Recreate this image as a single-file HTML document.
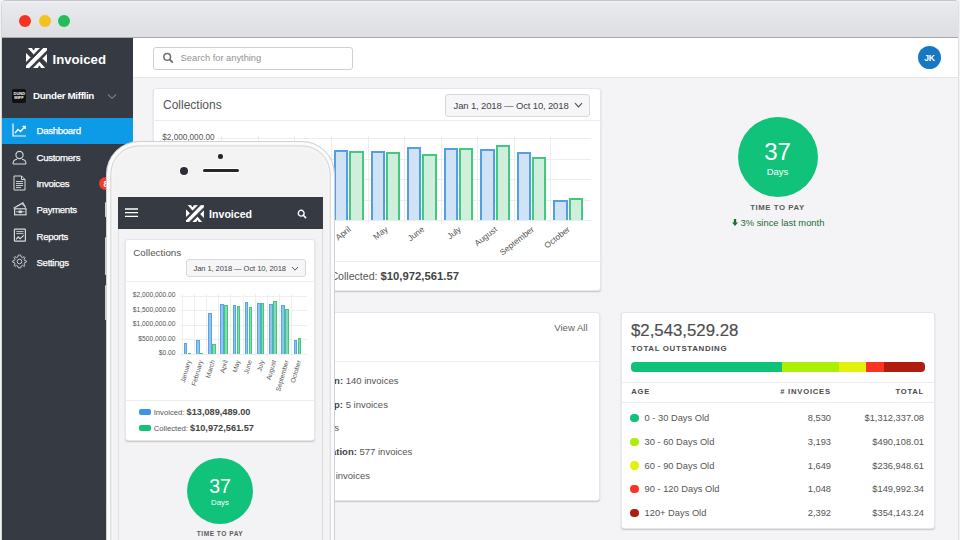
<!DOCTYPE html>
<html><head><meta charset="utf-8"><style>
*{margin:0;padding:0;box-sizing:border-box}
html,body{width:960px;height:540px;overflow:hidden;background:#f2f2f2;font-family:"Liberation Sans", sans-serif}
.t{position:absolute;white-space:nowrap;line-height:1}
.r{position:absolute}
</style></head>
<body>
<div class="r" style="left:1px;top:0px;width:958px;height:560px;background:#f4f4f6;border:1px solid #c4c4c6;border-right-color:#e0e0e2;border-left-color:#d6d6d8;border-radius:5px 5px 0 0"></div>
<div class="r" style="left:2px;top:1px;width:956px;height:37px;background:linear-gradient(#f4f5f7 0,#e9eaee 2px,#dcdee2);border-radius:4px 4px 0 0"></div>
<div class="r" style="left:2px;top:37px;width:956px;height:1px;background:#a9aaae"></div>
<div class="r" style="left:19px;top:14.5px;width:12px;height:12px;background:#f5331f;border-radius:50%"></div>
<div class="r" style="left:39px;top:14.5px;width:12px;height:12px;background:#f4c21c;border-radius:50%"></div>
<div class="r" style="left:58px;top:14.5px;width:12px;height:12px;background:#25bd58;border-radius:50%"></div>
<div class="r" style="left:2px;top:38px;width:131px;height:510px;background:#363a43"></div>
<div class="r" style="left:133px;top:38px;width:825px;height:40px;background:#fff;border-bottom:1px solid #e4e4e7"></div>
<div class="r" style="left:153px;top:47px;width:200px;height:22.5px;border:1px solid #cfcfd3;border-radius:3px;background:#fff"></div>
<svg class="r" style="left:161px;top:51px" width="14" height="14" viewBox="0 0 14 14"><circle cx="6.2" cy="5.9" r="3.3" fill="none" stroke="#707070" stroke-width="1.5"/><path d="M8.6 8.4 L11.2 11" stroke="#707070" stroke-width="1.8" stroke-linecap="round"/></svg>
<div class="t" style="left:180.6px;top:53.83px;font-size:9.3px;color:#929296;font-weight:400;letter-spacing:0px;">Search for anything</div>
<div class="r" style="left:918px;top:46.3px;width:23px;height:23px;background:#1877c3;border-radius:50%"></div>
<div class="t" style="left:929.5px;transform:translateX(-50%);top:54.02px;font-size:8.6px;color:#fff;font-weight:700;letter-spacing:-0.2px;">JK</div>
<svg class="r" style="left:26px;top:48px" width="21" height="20" viewBox="0 0 21 20" style="overflow:visible"><g fill="#fff" stroke="#2c2f36" stroke-width="0.8" stroke-linejoin="round">
<polygon points="1,-0.5 6.2,-0.5 7.55,2.1 8.9,-0.5 15,-0.5 7.55,6.95"/>
<polygon points="17.3,-0.5 21.5,-0.5 21.5,2.2 3.2,20.5 -0.5,20.5 -0.5,17.8"/>
<polygon points="-0.5,4 5,9.5 -0.5,15"/>
<polygon points="21.5,16 16,10.5 21.5,5"/>
<polygon points="20,20.5 14.8,20.5 13.45,17.9 12.1,20.5 6,20.5 13.45,13.05"/>
</g></svg>
<div class="t" style="left:52.5px;top:52.63px;font-size:13.2px;color:#fff;font-weight:700;letter-spacing:0px;">Invoiced</div>
<div class="r" style="left:12px;top:89px;width:14px;height:14px;background:#111;border-radius:2px"></div>
<div class="t" style="left:13.5px;top:92px;font-size:4px;line-height:4px;color:#fff;font-weight:700;width:11px;text-align:center">DUND<br>MIFF</div>
<div class="t" style="left:33px;top:91.00px;font-size:9.8px;color:#fff;font-weight:700;letter-spacing:-0.35px;">Dunder Mifflin</div>
<svg class="r" style="left:107px;top:93px" width="10" height="7" viewBox="0 0 10 7"><path d="M1 1.5 L5 5.5 L9 1.5" fill="none" stroke="#777a80" stroke-width="1.1"/></svg>
<div class="r" style="left:2px;top:118px;width:131px;height:26px;background:#0d9ae6"></div>
<div class="t" style="left:36.5px;top:126.37px;font-size:9.6px;color:#fff;font-weight:400;letter-spacing:-0.3px;-webkit-text-stroke:0.25px #fff">Dashboard</div>
<div class="t" style="left:36.5px;top:152.67px;font-size:9.6px;color:#fff;font-weight:400;letter-spacing:-0.3px;-webkit-text-stroke:0.25px #fff">Customers</div>
<div class="t" style="left:36.5px;top:178.97px;font-size:9.6px;color:#fff;font-weight:400;letter-spacing:-0.3px;-webkit-text-stroke:0.25px #fff">Invoices</div>
<div class="t" style="left:36.5px;top:205.27px;font-size:9.6px;color:#fff;font-weight:400;letter-spacing:-0.3px;-webkit-text-stroke:0.25px #fff">Payments</div>
<div class="t" style="left:36.5px;top:231.57px;font-size:9.6px;color:#fff;font-weight:400;letter-spacing:-0.3px;-webkit-text-stroke:0.25px #fff">Reports</div>
<div class="t" style="left:36.5px;top:257.87px;font-size:9.6px;color:#fff;font-weight:400;letter-spacing:-0.3px;-webkit-text-stroke:0.25px #fff">Settings</div>
<svg class="r" style="left:12px;top:123px" width="15" height="14" viewBox="0 0 15 14"><path d="M1 0.5 V13 H14" fill="none" stroke="#fff" stroke-width="1.2"/><path d="M3 10 L6 6.5 L8.5 8.5 L13 3.5 M10.5 3.3 H13.2 V6" fill="none" stroke="#fff" stroke-width="1.3"/></svg>
<svg class="r" style="left:12px;top:149.5px" width="15" height="15" viewBox="0 0 15 15"><circle cx="7.5" cy="5" r="3.6" fill="none" stroke="#d8d9db" stroke-width="1.1"/><path d="M1 14 C1 10.5 3.5 9.5 5 9.3 M14 14 C14 10.5 11.5 9.5 10 9.3 M1 14 H14" fill="none" stroke="#d8d9db" stroke-width="1.1"/></svg>
<svg class="r" style="left:13px;top:175px" width="13" height="16" viewBox="0 0 13 16"><path d="M1 1 H8.5 L12 4.5 V15 H1 Z M8.5 1 V4.5 H12" fill="none" stroke="#d8d9db" stroke-width="1"/><path d="M3 6.5 H10 M3 8.5 H10 M3 10.5 H10 M3 12.5 H8" stroke="#d8d9db" stroke-width="0.9"/></svg>
<svg class="r" style="left:12px;top:200px" width="16" height="16" viewBox="0 0 16 16"><path d="M1.6 8.2 L10.9 2.8 L13.6 7.6" fill="none" stroke="#d8d9db" stroke-width="1.2"/><path d="M4.5 6.6 L10.2 3.6 L11.5 6" fill="none" stroke="#d8d9db" stroke-width="0.8"/><rect x="2.6" y="8.8" width="11.4" height="6" fill="none" stroke="#d8d9db" stroke-width="1.2"/><ellipse cx="8.3" cy="11.8" rx="2" ry="1.5" fill="#d8d9db"/><path d="M4 11.8 H12.6" stroke="#d8d9db" stroke-width="0.8"/></svg>
<svg class="r" style="left:12px;top:227px" width="16" height="16" viewBox="0 0 16 16"><rect x="2.4" y="2.2" width="11" height="12" rx="0.8" fill="none" stroke="#d8d9db" stroke-width="1.2"/><path d="M4.3 4.6 H11.5 M4.3 6.6 H11.5" stroke="#d8d9db" stroke-width="0.9"/><path d="M4 12.4 L6.2 9.8 L8 11.6 L11.8 8.4" fill="none" stroke="#d8d9db" stroke-width="1.2"/></svg>
<svg class="r" style="left:11.5px;top:254px" width="15" height="15" viewBox="0 0 15 15"><path d="M7.5 1 L8.8 1.2 L9.2 3 L10.6 3.6 L12.1 2.6 L13 3.6 L12 5.1 L12.6 6.5 L14.3 6.9 L14.3 8.2 L12.6 8.6 L12 10 L13 11.5 L12.1 12.4 L10.6 11.4 L9.2 12 L8.8 13.8 L6.2 13.8 L5.8 12 L4.4 11.4 L2.9 12.4 L2 11.5 L3 10 L2.4 8.6 L0.7 8.2 L0.7 6.9 L2.4 6.5 L3 5.1 L2 3.6 L2.9 2.6 L4.4 3.6 L5.8 3 L6.2 1.2 Z" fill="none" stroke="#d8d9db" stroke-width="0.9"/><circle cx="7.5" cy="7.5" r="2.3" fill="none" stroke="#d8d9db" stroke-width="0.9"/></svg>
<div class="r" style="left:99px;top:176.7px;width:13.4px;height:13.4px;background:#f03e2b;border-radius:50%"></div>
<div class="t" style="left:103.4px;top:179.50px;font-size:8.5px;color:#fff;font-weight:700;letter-spacing:0px;">8</div>
<div class="r" style="left:153px;top:88px;width:447.5px;height:203px;background:#fff;border-radius:3px;border:1px solid #e6e6e8;box-shadow:0 1px 1.5px rgba(0,0,0,.2)"></div>
<div class="t" style="left:163px;top:98.94px;font-size:12px;color:#555;font-weight:400;letter-spacing:0px;">Collections</div>
<div class="r" style="left:444.7px;top:94.2px;width:145.8px;height:22.8px;background:#f6f6f8;border:1px solid #d8d8dc;border-radius:3px"></div>
<div class="t" style="left:453.6px;top:100.76px;font-size:9.5px;color:#3f4247;font-weight:400;letter-spacing:-0.15px;">Jan 1, 2018 — Oct 10, 2018</div>
<svg class="r" style="left:574px;top:101.5px" width="9" height="7" viewBox="0 0 9 7"><path d="M1 1.2 L4.5 4.9 L8 1.2" fill="none" stroke="#555" stroke-width="1.2"/></svg>
<div class="r" style="left:153px;top:119.5px;width:447.5px;height:1px;background:#ececee"></div>
<div class="r" style="left:218px;top:138px;width:372.5px;height:1px;background:#ececec"></div>
<div class="t" style="right:745.4px;top:133.56px;font-size:8.2px;color:#555;font-weight:400;letter-spacing:0px;">$2,000,000.00</div>
<div class="r" style="left:218px;top:158.5px;width:372.5px;height:1px;background:#ececec"></div>
<div class="t" style="right:745.4px;top:154.06px;font-size:8.2px;color:#555;font-weight:400;letter-spacing:0px;">$1,500,000.00</div>
<div class="r" style="left:218px;top:179px;width:372.5px;height:1px;background:#ececec"></div>
<div class="t" style="right:745.4px;top:174.56px;font-size:8.2px;color:#555;font-weight:400;letter-spacing:0px;">$1,000,000.00</div>
<div class="r" style="left:218px;top:199.5px;width:372.5px;height:1px;background:#ececec"></div>
<div class="t" style="right:745.4px;top:195.06px;font-size:8.2px;color:#555;font-weight:400;letter-spacing:0px;">$500,000.00</div>
<div class="r" style="left:218px;top:220px;width:372.5px;height:1px;background:#ececec"></div>
<div class="t" style="right:745.4px;top:215.56px;font-size:8.2px;color:#555;font-weight:400;letter-spacing:0px;">$0.00</div>
<div class="r" style="left:221.3px;top:136px;width:1px;height:87px;background:#ececec"></div>
<div class="r" style="left:257.87px;top:136px;width:1px;height:87px;background:#ececec"></div>
<div class="r" style="left:294.44px;top:136px;width:1px;height:87px;background:#ececec"></div>
<div class="r" style="left:331.01px;top:136px;width:1px;height:87px;background:#ececec"></div>
<div class="r" style="left:367.58000000000004px;top:136px;width:1px;height:87px;background:#ececec"></div>
<div class="r" style="left:404.15px;top:136px;width:1px;height:87px;background:#ececec"></div>
<div class="r" style="left:440.72px;top:136px;width:1px;height:87px;background:#ececec"></div>
<div class="r" style="left:477.29px;top:136px;width:1px;height:87px;background:#ececec"></div>
<div class="r" style="left:513.86px;top:136px;width:1px;height:87px;background:#ececec"></div>
<div class="r" style="left:550.4300000000001px;top:136px;width:1px;height:87px;background:#ececec"></div>
<div class="r" style="left:224.3px;top:204.63000000000002px;width:14.3px;height:15.369999999999976px;background:#cfe2f6;border:2px solid #519fe4;border-bottom:none"></div>
<div class="r" style="left:239.60000000000002px;top:219.39000000000001px;width:14.3px;height:0.6099999999999852px;background:#cfeedc;border:2px solid #41c97f;border-bottom:none"></div>
<div class="t" style="right:719.91px;top:224.00px;font-size:8.4px;color:#555;transform-origin:100% 50%;transform:rotate(-38deg)">January</div>
<div class="r" style="left:260.87px;top:200.12px;width:14.3px;height:19.879999999999995px;background:#cfe2f6;border:2px solid #519fe4;border-bottom:none"></div>
<div class="r" style="left:276.17px;top:218.98000000000002px;width:14.3px;height:1.0199999999999818px;background:#cfeedc;border:2px solid #41c97f;border-bottom:none"></div>
<div class="t" style="right:683.35px;top:224.00px;font-size:8.4px;color:#555;transform-origin:100% 50%;transform:rotate(-38deg)">February</div>
<div class="r" style="left:297.44px;top:162.4px;width:14.3px;height:57.599999999999994px;background:#cfe2f6;border:2px solid #519fe4;border-bottom:none"></div>
<div class="r" style="left:312.74px;top:205.86px;width:14.3px;height:14.139999999999986px;background:#cfeedc;border:2px solid #41c97f;border-bottom:none"></div>
<div class="t" style="right:646.77px;top:224.00px;font-size:8.4px;color:#555;transform-origin:100% 50%;transform:rotate(-38deg)">March</div>
<div class="r" style="left:334.01px;top:149.69px;width:14.3px;height:70.31px;background:#cfe2f6;border:2px solid #519fe4;border-bottom:none"></div>
<div class="r" style="left:349.31px;top:150.92000000000002px;width:14.3px;height:69.07999999999998px;background:#cfeedc;border:2px solid #41c97f;border-bottom:none"></div>
<div class="t" style="right:610.20px;top:224.00px;font-size:8.4px;color:#555;transform-origin:100% 50%;transform:rotate(-38deg)">April</div>
<div class="r" style="left:370.58000000000004px;top:150.715px;width:14.3px;height:69.285px;background:#cfe2f6;border:2px solid #519fe4;border-bottom:none"></div>
<div class="r" style="left:385.88000000000005px;top:151.945px;width:14.3px;height:68.055px;background:#cfeedc;border:2px solid #41c97f;border-bottom:none"></div>
<div class="t" style="right:573.63px;top:224.00px;font-size:8.4px;color:#555;transform-origin:100% 50%;transform:rotate(-38deg)">May</div>
<div class="r" style="left:407.15px;top:147.23000000000002px;width:14.3px;height:72.76999999999998px;background:#cfe2f6;border:2px solid #519fe4;border-bottom:none"></div>
<div class="r" style="left:422.45px;top:154.40500000000003px;width:14.3px;height:65.59499999999997px;background:#cfeedc;border:2px solid #41c97f;border-bottom:none"></div>
<div class="t" style="right:537.07px;top:224.00px;font-size:8.4px;color:#555;transform-origin:100% 50%;transform:rotate(-38deg)">June</div>
<div class="r" style="left:443.72px;top:147.64000000000001px;width:14.3px;height:72.35999999999999px;background:#cfe2f6;border:2px solid #519fe4;border-bottom:none"></div>
<div class="r" style="left:459.02000000000004px;top:148.255px;width:14.3px;height:71.745px;background:#cfeedc;border:2px solid #41c97f;border-bottom:none"></div>
<div class="t" style="right:500.49px;top:224.00px;font-size:8.4px;color:#555;transform-origin:100% 50%;transform:rotate(-38deg)">July</div>
<div class="r" style="left:480.29px;top:149.198px;width:14.3px;height:70.80199999999999px;background:#cfe2f6;border:2px solid #519fe4;border-bottom:none"></div>
<div class="r" style="left:495.59000000000003px;top:145.18px;width:14.3px;height:74.82px;background:#cfeedc;border:2px solid #41c97f;border-bottom:none"></div>
<div class="t" style="right:463.92px;top:224.00px;font-size:8.4px;color:#555;transform-origin:100% 50%;transform:rotate(-38deg)">August</div>
<div class="r" style="left:516.86px;top:151.699px;width:14.3px;height:68.30099999999999px;background:#cfe2f6;border:2px solid #519fe4;border-bottom:none"></div>
<div class="r" style="left:532.16px;top:157.193px;width:14.3px;height:62.80699999999999px;background:#cfeedc;border:2px solid #41c97f;border-bottom:none"></div>
<div class="t" style="right:427.36px;top:224.00px;font-size:8.4px;color:#555;transform-origin:100% 50%;transform:rotate(-38deg)">September</div>
<div class="r" style="left:553.4300000000001px;top:200.407px;width:14.3px;height:19.59299999999999px;background:#cfe2f6;border:2px solid #519fe4;border-bottom:none"></div>
<div class="r" style="left:568.73px;top:197.906px;width:14.3px;height:22.093999999999994px;background:#cfeedc;border:2px solid #41c97f;border-bottom:none"></div>
<div class="t" style="right:390.78px;top:224.00px;font-size:8.4px;color:#555;transform-origin:100% 50%;transform:rotate(-38deg)">October</div>
<div class="r" style="left:153px;top:261px;width:447.5px;height:1px;background:#ececee"></div>
<div class="t" style="left:190px;top:270.13px;font-size:11.3px;color:#555;font-weight:400;letter-spacing:0px;">Invoiced: <b style='font-size:11.2px'>$13,089,489.00</b></div>
<div class="t" style="right:501px;top:270.73px;font-size:10.6px;color:#555;font-weight:400;letter-spacing:0px;">Collected: <b style='font-size:11.3px;color:#444'>$10,972,561.57</b></div>
<div class="r" style="left:153px;top:311.6px;width:447px;height:189.5px;background:#fff;border-radius:3px;border:1px solid #e6e6e8;box-shadow:0 1px 1.5px rgba(0,0,0,.2)"></div>
<div class="t" style="right:372.4px;top:322.67px;font-size:9.6px;color:#666;font-weight:400;letter-spacing:0px;">View All</div>
<div class="r" style="left:153px;top:361px;width:447px;height:1px;background:#ececee"></div>
<div class="t" style="right:561.5px;top:375.96px;font-size:9.5px;color:#555;font-weight:400;letter-spacing:0px;"><b style='color:#444'>Awaiting Payment Plan:</b> 140 invoices</div>
<div class="t" style="right:572.1px;top:399.61px;font-size:9.5px;color:#555;font-weight:400;letter-spacing:0px;"><b style='color:#444'>Needs Follow Up:</b> 5 invoices</div>
<div class="t" style="right:621px;top:423.26px;font-size:9.5px;color:#555;font-weight:400;letter-spacing:0px;"><b style='color:#444'>Disputed:</b> 12 invoices</div>
<div class="t" style="right:547.7px;top:446.91px;font-size:9.5px;color:#555;font-weight:400;letter-spacing:0px;"><b style='color:#444'>Needs Payment Information:</b> 577 invoices</div>
<div class="t" style="right:590px;top:470.56px;font-size:9.5px;color:#555;font-weight:400;letter-spacing:0px;"><b style='color:#444'>Pending:</b> 31 invoices</div>
<div class="r" style="left:737.5px;top:116.5px;width:80px;height:80px;background:#10c27a;border-radius:50%"></div>
<div class="t" style="left:777.5px;transform:translateX(-50%);top:139.68px;font-size:24px;color:#fff;font-weight:400;letter-spacing:0px;">37</div>
<div class="t" style="left:777.5px;transform:translateX(-50%);top:166.96px;font-size:9.5px;color:#fff;font-weight:400;letter-spacing:0px;">Days</div>
<div class="t" style="left:777.5px;transform:translateX(-50%);top:204.40px;font-size:7.8px;color:#5a5a5c;font-weight:700;letter-spacing:0.55px;">TIME TO PAY</div>
<svg class="r" style="left:732px;top:219px" width="6" height="7" viewBox="0 0 6 7"><path d="M1.8 0 H4.2 V3.5 H6 L3 7 L0 3.5 H1.8 Z" fill="#1e6e38"/></svg>
<div class="t" style="left:740.5px;top:217.74px;font-size:9.4px;color:#226b35;font-weight:400;letter-spacing:0px;">3% since last month</div>
<div class="r" style="left:621px;top:312px;width:314px;height:216.8px;background:#fff;border-radius:3px;border:1px solid #e6e6e8;box-shadow:0 1px 1.5px rgba(0,0,0,.2)"></div>
<div class="t" style="left:631px;top:322.58px;font-size:16.8px;color:#4e4e50;font-weight:400;letter-spacing:0px;-webkit-text-stroke:0.2px #4e4e50">$2,543,529.28</div>
<div class="t" style="left:631.3px;top:344.51px;font-size:7.9px;color:#4a4a4a;font-weight:700;letter-spacing:0.65px;">TOTAL OUTSTANDING</div>
<div class="r" style="left:631px;top:362px;width:293.6px;height:9.6px;border-radius:4px;overflow:hidden"><div class="r" style="left:0.0px;top:0;width:151.1px;height:9.6px;background:#10c178"></div><div class="r" style="left:151.1px;top:0;width:57.0px;height:9.6px;background:#adee08"></div><div class="r" style="left:208.1px;top:0;width:26.8px;height:9.6px;background:#e2f20a"></div><div class="r" style="left:234.9px;top:0;width:17.9px;height:9.6px;background:#fb3322"></div><div class="r" style="left:252.8px;top:0;width:40.8px;height:9.6px;background:#b01c0e"></div></div>
<div class="r" style="left:621px;top:382px;width:314px;height:1px;background:#ececee"></div>
<div class="t" style="left:631.3px;top:388.07px;font-size:7.6px;color:#4a4a4a;font-weight:700;letter-spacing:0.8px;">AGE</div>
<div class="t" style="right:129.20000000000005px;top:388.07px;font-size:7.6px;color:#4a4a4a;font-weight:700;letter-spacing:0.8px;"># INVOICES</div>
<div class="t" style="right:36px;top:388.07px;font-size:7.6px;color:#4a4a4a;font-weight:700;letter-spacing:0.8px;">TOTAL</div>
<div class="r" style="left:621px;top:402px;width:314px;height:1px;background:#ececee"></div>
<div class="r" style="left:630.3px;top:414.2px;width:8.3px;height:8.3px;background:#10c178;border-radius:50%"></div>
<div class="t" style="left:644.6px;top:414.33px;font-size:9.3px;color:#555;font-weight:400;letter-spacing:0px;">0 - 30 Days Old</div>
<div class="t" style="right:129px;top:414.33px;font-size:9.3px;color:#555;font-weight:400;letter-spacing:0px;">8,530</div>
<div class="t" style="right:36px;top:414.33px;font-size:9.3px;color:#555;font-weight:400;letter-spacing:0px;">$1,312,337.08</div>
<div class="r" style="left:630.3px;top:437.8px;width:8.3px;height:8.3px;background:#adee08;border-radius:50%"></div>
<div class="t" style="left:644.6px;top:437.93px;font-size:9.3px;color:#555;font-weight:400;letter-spacing:0px;">30 - 60 Days Old</div>
<div class="t" style="right:129px;top:437.93px;font-size:9.3px;color:#555;font-weight:400;letter-spacing:0px;">3,193</div>
<div class="t" style="right:36px;top:437.93px;font-size:9.3px;color:#555;font-weight:400;letter-spacing:0px;">$490,108.01</div>
<div class="r" style="left:630.3px;top:461.4px;width:8.3px;height:8.3px;background:#e2f20a;border-radius:50%"></div>
<div class="t" style="left:644.6px;top:461.53px;font-size:9.3px;color:#555;font-weight:400;letter-spacing:0px;">60 - 90 Days Old</div>
<div class="t" style="right:129px;top:461.53px;font-size:9.3px;color:#555;font-weight:400;letter-spacing:0px;">1,649</div>
<div class="t" style="right:36px;top:461.53px;font-size:9.3px;color:#555;font-weight:400;letter-spacing:0px;">$236,948.61</div>
<div class="r" style="left:630.3px;top:485.0px;width:8.3px;height:8.3px;background:#fb3322;border-radius:50%"></div>
<div class="t" style="left:644.6px;top:485.13px;font-size:9.3px;color:#555;font-weight:400;letter-spacing:0px;">90 - 120 Days Old</div>
<div class="t" style="right:129px;top:485.13px;font-size:9.3px;color:#555;font-weight:400;letter-spacing:0px;">1,048</div>
<div class="t" style="right:36px;top:485.13px;font-size:9.3px;color:#555;font-weight:400;letter-spacing:0px;">$149,992.34</div>
<div class="r" style="left:630.3px;top:508.6px;width:8.3px;height:8.3px;background:#b01c0e;border-radius:50%"></div>
<div class="t" style="left:644.6px;top:508.73px;font-size:9.3px;color:#555;font-weight:400;letter-spacing:0px;">120+ Days Old</div>
<div class="t" style="right:129px;top:508.73px;font-size:9.3px;color:#555;font-weight:400;letter-spacing:0px;">2,392</div>
<div class="t" style="right:36px;top:508.73px;font-size:9.3px;color:#555;font-weight:400;letter-spacing:0px;">$354,143.24</div>
<div class="r" style="left:106px;top:141px;width:228.5px;height:460px;background:#f3f3f4;border:1px solid #d0d0d3;border-radius:33px;box-shadow:inset 0 0 0 3.2px #fbfbfb, inset 0 0 0 4.4px #d9d9dc, inset 0 0 4px 5px #f8f8f9"></div>
<div class="r" style="left:104.5px;top:202px;width:1.6px;height:15px;background:#d5d5d7;border-radius:1px"></div>
<div class="r" style="left:104.5px;top:237px;width:1.6px;height:38px;background:#d5d5d7;border-radius:1px"></div>
<div class="r" style="left:104.5px;top:285px;width:1.6px;height:35px;background:#d5d5d7;border-radius:1px"></div>
<div class="r" style="left:218.3px;top:154px;width:4.6px;height:4.6px;background:#222;border-radius:50%"></div>
<div class="r" style="left:180px;top:166.5px;width:8px;height:8px;background:#2a2d33;border-radius:50%;box-shadow:0 0 0 1px #fff"></div>
<div class="r" style="left:202.5px;top:169px;width:36.2px;height:3.2px;background:#25272b;border-radius:2px;box-shadow:0 0 0 1px #fff"></div>
<div class="r" style="left:118px;top:197px;width:205px;height:360px;background:#f3f3f5;border-left:1px solid #e2e2e4;border-right:1px solid #dcdcde"></div>
<div class="r" style="left:118px;top:197px;width:205px;height:32.2px;background:#363a43"></div>
<svg class="r" style="left:124.5px;top:208px" width="14" height="10" viewBox="0 0 14 10"><path d="M0 1 H13 M0 4.7 H13 M0 8.4 H13" stroke="#fff" stroke-width="1.3"/></svg>
<svg class="r" style="left:186.4px;top:205px" width="18" height="17.4" viewBox="0 0 21 20" style="overflow:visible"><g fill="#fff" stroke="#2c2f36" stroke-width="0.8" stroke-linejoin="round">
<polygon points="1,-0.5 6.2,-0.5 7.55,2.1 8.9,-0.5 15,-0.5 7.55,6.95"/>
<polygon points="17.3,-0.5 21.5,-0.5 21.5,2.2 3.2,20.5 -0.5,20.5 -0.5,17.8"/>
<polygon points="-0.5,4 5,9.5 -0.5,15"/>
<polygon points="21.5,16 16,10.5 21.5,5"/>
<polygon points="20,20.5 14.8,20.5 13.45,17.9 12.1,20.5 6,20.5 13.45,13.05"/>
</g></svg>
<div class="t" style="left:209.1px;top:208.73px;font-size:10.6px;color:#fff;font-weight:700;letter-spacing:0px;">Invoiced</div>
<svg class="r" style="left:297px;top:208.5px" width="10" height="10" viewBox="0 0 10 10"><circle cx="4.2" cy="4.2" r="2.9" fill="none" stroke="#fff" stroke-width="1.4"/><path d="M6.3 6.3 L8.6 8.6" stroke="#fff" stroke-width="1.6" stroke-linecap="round"/></svg>
<div class="r" style="left:125px;top:238.75px;width:190px;height:202.6px;background:#fff;border-radius:3px;border:1px solid #e6e6e8;box-shadow:0 1px 1.5px rgba(0,0,0,.2)"></div>
<div class="t" style="left:133.3px;top:248.00px;font-size:9.8px;color:#555;font-weight:400;letter-spacing:0px;">Collections</div>
<div class="r" style="left:186.3px;top:259.1px;width:119.8px;height:18.4px;background:#f6f6f8;border:1px solid #d8d8dc;border-radius:3px"></div>
<div class="t" style="left:193.5px;top:264.67px;font-size:7.6px;color:#454545;font-weight:400;letter-spacing:-0.1px;">Jan 1, 2018 — Oct 10, 2018</div>
<svg class="r" style="left:291px;top:265.5px" width="8" height="6" viewBox="0 0 8 6"><path d="M1 1 L4 4.2 L7 1" fill="none" stroke="#555" stroke-width="1"/></svg>
<div class="r" style="left:125px;top:280.5px;width:190px;height:1px;background:#ececee"></div>
<div class="r" style="left:179.5px;top:295.6px;width:127px;height:1px;background:#eeeeee"></div>
<div class="t" style="right:784.5px;top:292.13px;font-size:6.7px;color:#555;font-weight:400;letter-spacing:0px;">$2,000,000.00</div>
<div class="r" style="left:179.5px;top:310.2px;width:127px;height:1px;background:#eeeeee"></div>
<div class="t" style="right:784.5px;top:306.73px;font-size:6.7px;color:#555;font-weight:400;letter-spacing:0px;">$1,500,000.00</div>
<div class="r" style="left:179.5px;top:324.7px;width:127px;height:1px;background:#eeeeee"></div>
<div class="t" style="right:784.5px;top:321.23px;font-size:6.7px;color:#555;font-weight:400;letter-spacing:0px;">$1,000,000.00</div>
<div class="r" style="left:179.5px;top:339.3px;width:127px;height:1px;background:#eeeeee"></div>
<div class="t" style="right:784.5px;top:335.83px;font-size:6.7px;color:#555;font-weight:400;letter-spacing:0px;">$500,000.00</div>
<div class="r" style="left:179.5px;top:353.8px;width:127px;height:1px;background:#eeeeee"></div>
<div class="t" style="right:784.5px;top:350.33px;font-size:6.7px;color:#555;font-weight:400;letter-spacing:0px;">$0.00</div>
<div class="r" style="left:181.6px;top:294px;width:1px;height:62px;background:#eeeeee"></div>
<div class="r" style="left:193.79999999999998px;top:294px;width:1px;height:62px;background:#eeeeee"></div>
<div class="r" style="left:206.0px;top:294px;width:1px;height:62px;background:#eeeeee"></div>
<div class="r" style="left:218.2px;top:294px;width:1px;height:62px;background:#eeeeee"></div>
<div class="r" style="left:230.39999999999998px;top:294px;width:1px;height:62px;background:#eeeeee"></div>
<div class="r" style="left:242.6px;top:294px;width:1px;height:62px;background:#eeeeee"></div>
<div class="r" style="left:254.79999999999998px;top:294px;width:1px;height:62px;background:#eeeeee"></div>
<div class="r" style="left:267.0px;top:294px;width:1px;height:62px;background:#eeeeee"></div>
<div class="r" style="left:279.2px;top:294px;width:1px;height:62px;background:#eeeeee"></div>
<div class="r" style="left:291.4px;top:294px;width:1px;height:62px;background:#eeeeee"></div>
<div class="r" style="left:183.79999999999998px;top:343.033px;width:3.6px;height:10.766999999999996px;background:#8ec4f0;border:1px solid #58a4e6;border-bottom:none"></div>
<div class="r" style="left:187.79999999999998px;top:353.218px;width:3.4px;height:0.5819999999999936px;background:#84dcaa;border:1px solid #40c97e;border-bottom:none"></div>
<div class="t" style="right:770.80px;top:356.50px;font-size:6.6px;color:#555;transform-origin:100% 50%;transform:rotate(-74deg)">January</div>
<div class="r" style="left:195.99999999999997px;top:339.832px;width:3.6px;height:13.968000000000018px;background:#8ec4f0;border:1px solid #58a4e6;border-bottom:none"></div>
<div class="r" style="left:199.99999999999997px;top:353.218px;width:3.4px;height:0.5819999999999936px;background:#84dcaa;border:1px solid #40c97e;border-bottom:none"></div>
<div class="t" style="right:758.60px;top:356.50px;font-size:6.6px;color:#555;transform-origin:100% 50%;transform:rotate(-74deg)">February</div>
<div class="r" style="left:208.2px;top:313.06px;width:3.6px;height:40.74000000000001px;background:#8ec4f0;border:1px solid #58a4e6;border-bottom:none"></div>
<div class="r" style="left:212.2px;top:343.906px;width:3.4px;height:9.894000000000005px;background:#84dcaa;border:1px solid #40c97e;border-bottom:none"></div>
<div class="t" style="right:746.40px;top:356.50px;font-size:6.6px;color:#555;transform-origin:100% 50%;transform:rotate(-74deg)">March</div>
<div class="r" style="left:220.39999999999998px;top:304.039px;width:3.6px;height:49.761000000000024px;background:#8ec4f0;border:1px solid #58a4e6;border-bottom:none"></div>
<div class="r" style="left:224.39999999999998px;top:304.91200000000003px;width:3.4px;height:48.88799999999998px;background:#84dcaa;border:1px solid #40c97e;border-bottom:none"></div>
<div class="t" style="right:734.20px;top:356.50px;font-size:6.6px;color:#555;transform-origin:100% 50%;transform:rotate(-74deg)">April</div>
<div class="r" style="left:232.59999999999997px;top:304.7665px;width:3.6px;height:49.033500000000004px;background:#8ec4f0;border:1px solid #58a4e6;border-bottom:none"></div>
<div class="r" style="left:236.59999999999997px;top:305.6395px;width:3.4px;height:48.16050000000001px;background:#84dcaa;border:1px solid #40c97e;border-bottom:none"></div>
<div class="t" style="right:722.00px;top:356.50px;font-size:6.6px;color:#555;transform-origin:100% 50%;transform:rotate(-74deg)">May</div>
<div class="r" style="left:244.79999999999998px;top:302.293px;width:3.6px;height:51.507000000000005px;background:#8ec4f0;border:1px solid #58a4e6;border-bottom:none"></div>
<div class="r" style="left:248.79999999999998px;top:307.3855px;width:3.4px;height:46.41450000000003px;background:#84dcaa;border:1px solid #40c97e;border-bottom:none"></div>
<div class="t" style="right:709.80px;top:356.50px;font-size:6.6px;color:#555;transform-origin:100% 50%;transform:rotate(-74deg)">June</div>
<div class="r" style="left:257.0px;top:302.584px;width:3.6px;height:51.21600000000001px;background:#8ec4f0;border:1px solid #58a4e6;border-bottom:none"></div>
<div class="r" style="left:261.0px;top:303.0205px;width:3.4px;height:50.779499999999985px;background:#84dcaa;border:1px solid #40c97e;border-bottom:none"></div>
<div class="t" style="right:697.60px;top:356.50px;font-size:6.6px;color:#555;transform-origin:100% 50%;transform:rotate(-74deg)">July</div>
<div class="r" style="left:269.2px;top:303.6898px;width:3.6px;height:50.11020000000002px;background:#8ec4f0;border:1px solid #58a4e6;border-bottom:none"></div>
<div class="r" style="left:273.2px;top:300.838px;width:3.4px;height:52.96199999999999px;background:#84dcaa;border:1px solid #40c97e;border-bottom:none"></div>
<div class="t" style="right:685.40px;top:356.50px;font-size:6.6px;color:#555;transform-origin:100% 50%;transform:rotate(-74deg)">August</div>
<div class="r" style="left:281.4px;top:305.4649px;width:3.6px;height:48.33510000000001px;background:#8ec4f0;border:1px solid #58a4e6;border-bottom:none"></div>
<div class="r" style="left:285.4px;top:309.3643px;width:3.4px;height:44.4357px;background:#84dcaa;border:1px solid #40c97e;border-bottom:none"></div>
<div class="t" style="right:673.20px;top:356.50px;font-size:6.6px;color:#555;transform-origin:100% 50%;transform:rotate(-74deg)">September</div>
<div class="r" style="left:293.59999999999997px;top:340.0357px;width:3.6px;height:13.764299999999992px;background:#8ec4f0;border:1px solid #58a4e6;border-bottom:none"></div>
<div class="r" style="left:297.59999999999997px;top:338.2606px;width:3.4px;height:15.5394px;background:#84dcaa;border:1px solid #40c97e;border-bottom:none"></div>
<div class="t" style="right:661.00px;top:356.50px;font-size:6.6px;color:#555;transform-origin:100% 50%;transform:rotate(-74deg)">October</div>
<div class="r" style="left:125px;top:399.5px;width:190px;height:1px;background:#ececee"></div>
<div class="r" style="left:138.9px;top:408.7px;width:11.8px;height:6.4px;background:#3c95e0;border-radius:2px"></div>
<div class="t" style="left:153.7px;top:408.18px;font-size:7.7px;color:#555;font-weight:400;letter-spacing:0px;">Invoiced: <b style='font-size:9.2px;color:#444'>$13,089,489.00</b></div>
<div class="r" style="left:138.9px;top:425px;width:11.8px;height:6px;background:#14c27a;border-radius:2px"></div>
<div class="t" style="left:153.7px;top:424.38px;font-size:7.7px;color:#555;font-weight:400;letter-spacing:0px;">Collected: <b style='font-size:9.2px;color:#444'>$10,972,561.57</b></div>
<div class="r" style="left:187px;top:457.5px;width:66px;height:66px;background:#10c27a;border-radius:50%"></div>
<div class="t" style="left:220px;transform:translateX(-50%);top:476.99px;font-size:19.5px;color:#fff;font-weight:400;letter-spacing:0px;">37</div>
<div class="t" style="left:220px;transform:translateX(-50%);top:498.90px;font-size:7.8px;color:#fff;font-weight:400;letter-spacing:0px;">Days</div>
<div class="t" style="left:220px;transform:translateX(-50%);top:530.81px;font-size:6.6px;color:#5c5c5e;font-weight:700;letter-spacing:0.5px;">TIME TO PAY</div>
</body></html>
